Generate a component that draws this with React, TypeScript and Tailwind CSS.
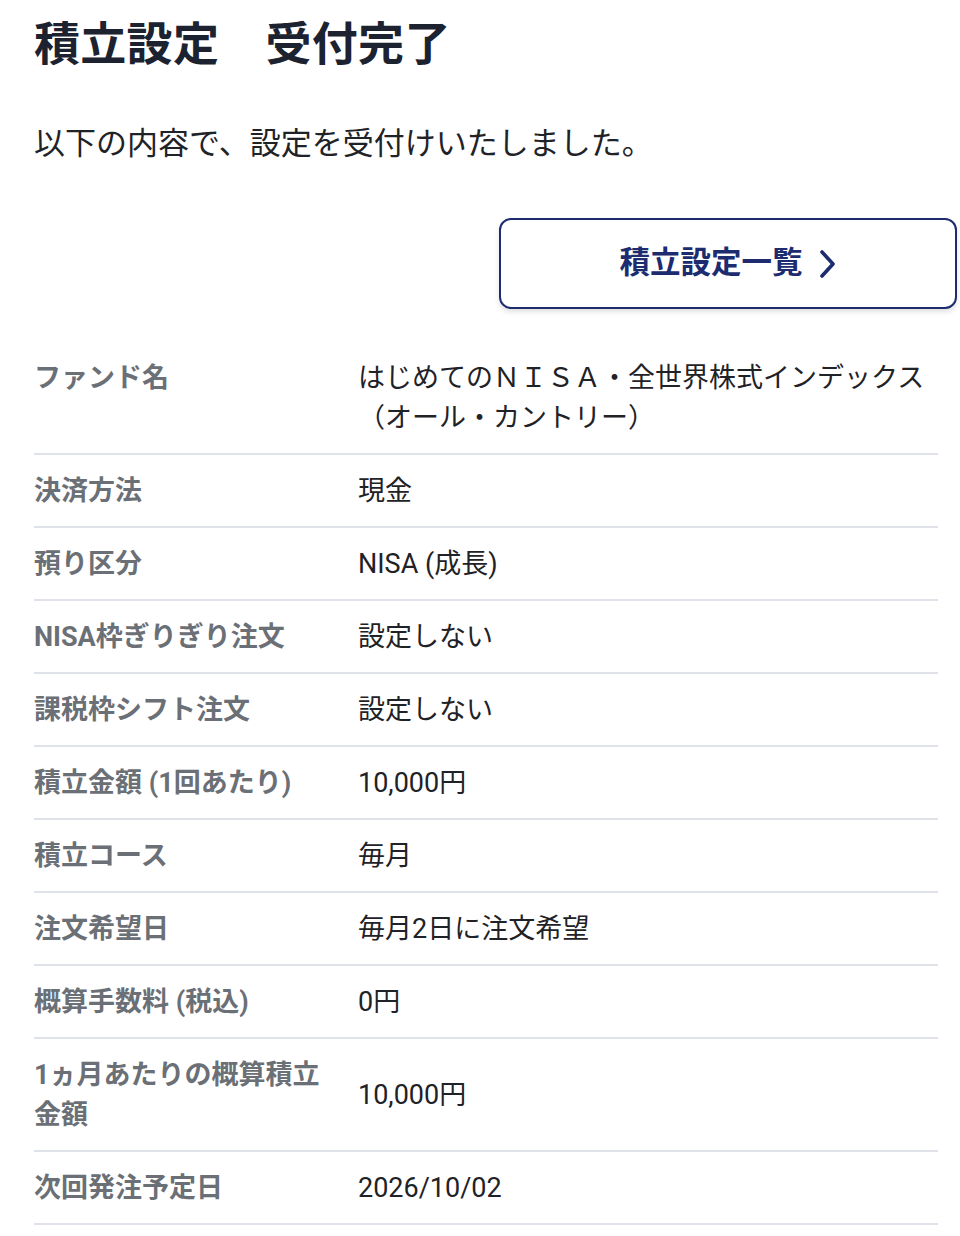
import React from "react";

const rows: { label: string; value: React.ReactNode }[] = [
  { label: "ファンド名", value: "はじめてのＮＩＳＡ・全世界株式インデックス（オール・カントリー）" },
  { label: "決済方法", value: "現金" },
  { label: "預り区分", value: "NISA (成長)" },
  { label: "NISA枠ぎりぎり注文", value: "設定しない" },
  { label: "課税枠シフト注文", value: "設定しない" },
  { label: "積立金額 (1回あたり)", value: "10,000円" },
  { label: "積立コース", value: "毎月" },
  { label: "注文希望日", value: "毎月2日に注文希望" },
  { label: "概算手数料 (税込)", value: "0円" },
  { label: "1ヵ月あたりの概算積立金額", value: "10,000円" },
  { label: "次回発注予定日", value: "2026/10/02" },
];

export default function App() {
  return (
    <div
      className="min-h-[1236px] bg-white pl-[34px] pr-[22px] pt-[12px] flex flex-col"
      style={{ fontFamily: 'Roboto, "Noto Sans CJK JP", sans-serif' }}
    >
      <h1 className="text-[46px] leading-[64px] font-bold text-[#1c2230] tracking-[0.3px]">
        積立設定　受付完了
      </h1>
      <p className="mt-[45px] text-[31px] leading-[45px] text-[#1f2328]">
        以下の内容で、設定を受付けいたしました。
      </p>
      <div className="mt-[52px] flex justify-end">
        <button className="w-[458px] h-[91px] -mr-[19px] rounded-[12px] border-2 border-[#1d2c6f] bg-white shadow-[0_3px_5px_rgba(0,0,0,0.12)] flex items-center justify-center gap-[16px] text-[#1d2c6f]">
          <span className="text-[30.5px] font-bold leading-none">積立設定一覧</span>
          <svg width="18" height="28" viewBox="0 0 18 28" fill="none">
            <path d="M3 2 L14 14 L3 26" stroke="#1d2c6f" strokeWidth="3.6" strokeLinecap="round" strokeLinejoin="round" />
          </svg>
        </button>
      </div>
      <dl className="mt-[33px] flex flex-col">
        {rows.map((r, i) => (
          <div key={i} className="flex gap-[20px] border-b-2 border-[#dfe3e9] py-[15.5px]">
            <dt className="w-[304px] shrink-0 self-start text-[27px] leading-[40px] font-bold text-[#6b6f76]">
              {r.label}
            </dt>
            <dd className="flex-1 self-center text-[27px] leading-[40px] text-[#1f2226]">{r.value}</dd>
          </div>
        ))}
      </dl>
    </div>
  );
}
